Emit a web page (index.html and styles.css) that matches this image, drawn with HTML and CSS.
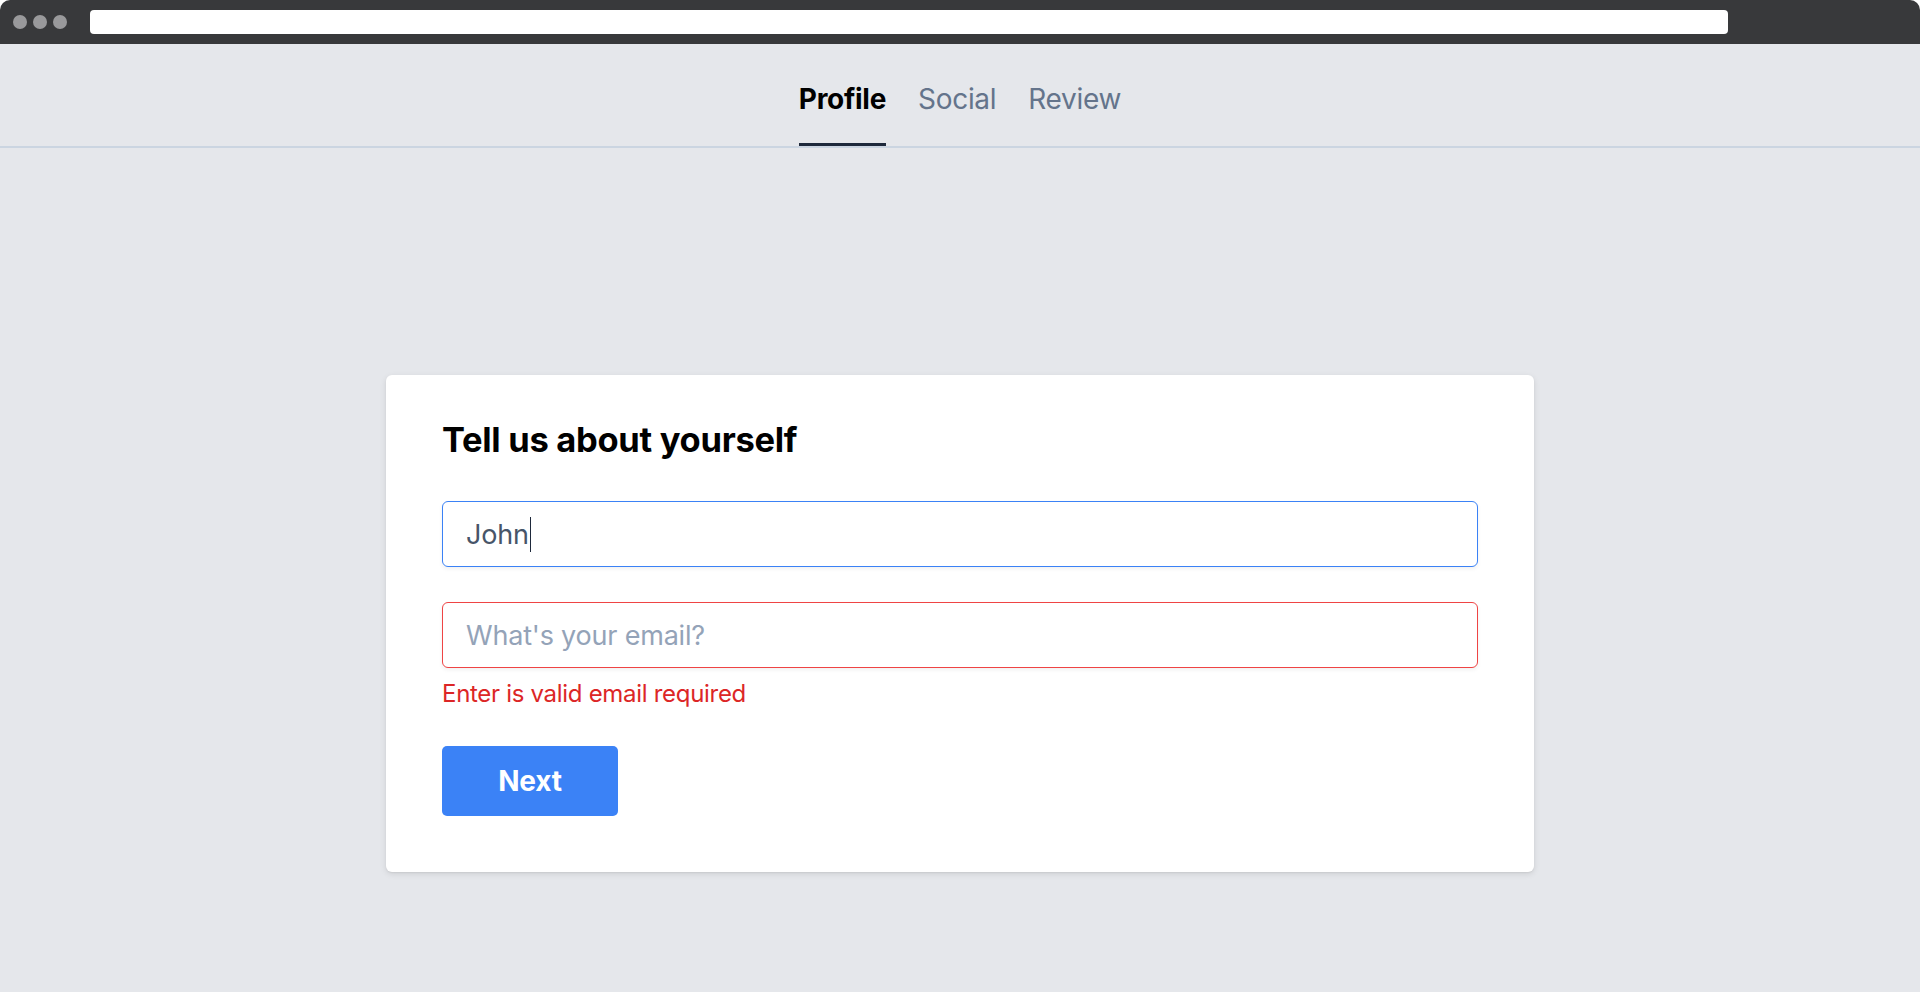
FILE: index.html
```html
<!DOCTYPE html>
<html lang="en">
<head>
<meta charset="utf-8">
<title>Tell us about yourself</title>
<link rel="stylesheet" href="styles.css">
</head>
<body>
<div class="window">
  <div class="chrome">
    <div class="dots"><span class="dot"></span><span class="dot"></span><span class="dot"></span></div>
    <div class="address"></div>
  </div>
  <div class="page">
    <nav class="tabs">
      <a class="tab active">Profile</a>
      <a class="tab">Social</a>
      <a class="tab">Review</a>
    </nav>
    <main class="main">
      <section class="card">
        <h1 class="title">Tell us about yourself</h1>
        <div class="field">
          <div class="input focused"><span class="value">John</span><span class="caret"></span></div>
        </div>
        <div class="field">
          <div class="input invalid"><span class="placeholder">What's your email?</span></div>
          <div class="error">Enter is valid email required</div>
        </div>
        <button class="btn" type="button">Next</button>
      </section>
    </main>
  </div>
</div>
</body>
</html>
```
FILE: styles.css
```css
* { box-sizing: border-box; }
html, body { margin: 0; padding: 0; background: #ffffff; }
body { font-family: "Inter", "Liberation Sans", sans-serif; width: 1920px; height: 992px; overflow: hidden; }

.window { display: flex; flex-direction: column; height: 992px; }

.chrome {
  height: 44px;
  background: #38393b;
  border-radius: 10px 10px 0 0;
  display: flex;
  align-items: center;
  padding: 0 0 0 13px;
  flex: none;
}
.dots { display: flex; gap: 6px; }
.dot { width: 14px; height: 14px; border-radius: 50%; background: #99999b; }
.address {
  margin-left: 23px;
  width: 1638px;
  height: 24px;
  background: #ffffff;
  border-radius: 4px;
}

.page { flex: 1; background: #e5e7eb; display: flex; flex-direction: column; }

.tabs {
  height: 104px;
  border-bottom: 2px solid #cbd5e1;
  display: flex;
  justify-content: center;
  align-items: flex-end;
  gap: 32px;
}
.tab {
  font-size: 28px;
  line-height: 34px;
  color: #64748b;
  padding: 0 0 27px;
  border-bottom: 3px solid transparent;
  letter-spacing: -0.3px;
}
.tab.active { color: #000; font-weight: 700; border-bottom-color: #1e293b; }

.main { display: flex; justify-content: center; padding-top: 227px; }

.card {
  width: 1148px;
  background: #ffffff;
  border-radius: 6px;
  box-shadow: 0 2px 6px rgba(0,0,0,0.10), 0 1px 2px rgba(0,0,0,0.06);
  padding: 40px 56px 56px;
  display: flex;
  flex-direction: column;
}
.title { margin: 0 0 36px; font-size: 34.5px; line-height: 50px; font-weight: 700; color: #000; letter-spacing: -0.3px; }

.field { margin-bottom: 35px; }
.field + .field { margin-bottom: 36px; }

.input {
  height: 66px;
  border: 1px solid #3b82f6;
  border-radius: 6px;
  padding: 0 23px;
  display: flex;
  align-items: center;
  font-size: 27px;
  box-shadow: 0 2px 4px rgba(0,0,0,0.06);
  background: #fff;
}
.input.invalid { border-color: #ef4444; }
.value { color: #475569; letter-spacing: -0.2px; }
.caret { width: 1px; height: 35px; background: #1e293b; margin-left: 1px; }
.placeholder { color: #94a3b8; letter-spacing: -0.2px; }

.error { color: #dc2626; font-size: 24px; line-height: 32px; margin-top: 10px; letter-spacing: -0.3px; }

.btn {
  align-self: flex-start;
  width: 176px;
  height: 70px;
  border: none;
  border-radius: 5px;
  background: #3b82f6;
  color: #fff;
  font-family: inherit;
  font-size: 28px;
  font-weight: 700;
  letter-spacing: -0.2px;
}
```
